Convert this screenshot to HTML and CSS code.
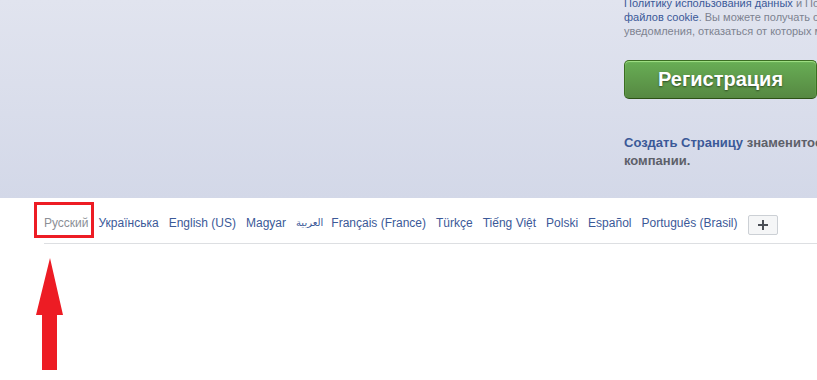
FILE: index.html
```html
<!DOCTYPE html>
<html lang="ru">
<head>
    <meta charset="UTF-8">
    <meta name="viewport" content="width=device-width, initial-scale=1.0">
    <title>Регистрация</title>
    <link rel="stylesheet" href="styles.css">
</head>
<body>
    <div class="top">
        <div class="signup">
            <p class="legal">
                <a href="#">Политику использования данных</a> и Политику в отношении<br>
                <a href="#">файлов cookie</a>. Вы можете получать сообщения и<br>
                уведомления, отказаться от которых можно в любой момент.
            </p>
            <button class="signup-btn">Регистрация</button>
            <p class="create-page">
                <a href="#">Создать Страницу</a> знаменитости, группы или<br>
                компании.
            </p>
        </div>
    </div>

    <div class="footer">
        <ul class="langs">
            <li class="current">Русский</li>
            <li><a href="#">Українська</a></li>
            <li><a href="#">English (US)</a></li>
            <li><a href="#">Magyar</a></li>
            <li class="arabic"><a href="#" dir="rtl">العربية</a></li>
            <li><a href="#">Français (France)</a></li>
            <li><a href="#">Türkçe</a></li>
            <li><a href="#">Tiếng Việt</a></li>
            <li><a href="#">Polski</a></li>
            <li><a href="#">Español</a></li>
            <li><a href="#">Português (Brasil)</a></li>
            <li>
                <button class="more-btn">
                    <svg width="10" height="10" viewBox="0 0 10 10">
                        <path d="M5 0v10M0 5h10" stroke="#4b4f56" stroke-width="2"/>
                    </svg>
                </button>
            </li>
        </ul>
    </div>

    <!-- annotation -->
    <div class="mark-box"></div>
    <svg class="mark-arrow" width="28" height="112" viewBox="0 0 28 112">
        <polygon points="14,0 27,57 21,57 21,112 6,112 6,57 0,57" fill="#ed1c24"/>
    </svg>
</body>
</html>
```

FILE: styles.css
```css
body {
    margin: 0;
    font-family: "Liberation Sans", Arial, sans-serif;
    background-color: #FFF;
    overflow: hidden;
    height: 380px;
    position: relative;
}
a {
    color: #3b5998;
    text-decoration: none;
}
.top {
    height: 198px;
    background: linear-gradient(#e1e4ef, #d3d8e8);
    overflow: hidden;
}
.signup {
    margin-left: 624px;
    width: 400px;
}
.legal {
    margin: -4px 0 0;
    font-size: 11px;
    line-height: 14px;
    color: #7d8290;
    white-space: nowrap;
}
.signup-btn {
    display: block;
    margin-top: 22px;
    width: 193px;
    height: 39px;
    padding: 0;
    border: 1px solid #3b6e22;
    border-bottom-color: #2c5115;
    border-radius: 5px;
    background: linear-gradient(#68ae55, #568842);
    box-shadow: inset 0 1px 1px #a4e388;
    color: #FFF;
    font-family: "Liberation Sans", Arial, sans-serif;
    font-size: 20px;
    font-weight: bold;
    text-shadow: 0 1px 2px rgba(0, 0, 0, 0.5);
}
.create-page {
    margin: 35px 0 0;
    font-size: 13px;
    line-height: 18px;
    font-weight: bold;
    color: #5d6069;
    white-space: nowrap;
}
.footer {
    padding-left: 44px;
}
.langs {
    display: flex;
    align-items: flex-start;
    gap: 10px;
    list-style: none;
    margin: 0;
    padding: 17px 0 8px;
    border-bottom: 1px solid #dddfe2;
    font-size: 12px;
    line-height: 16px;
    white-space: nowrap;
}
.langs li {
    margin: 0;
}
.current {
    color: #8c8f96;
    margin-left: -1px;
}
.arabic {
    font-family: "DejaVu Sans", sans-serif;
    font-size: 10px;
}
.langs .arabic {
    margin-right: -2px;
}
.more-btn {
    display: flex;
    align-items: center;
    justify-content: center;
    width: 30px;
    height: 20px;
    padding: 0;
    border: 1px solid #ccd0d5;
    border-radius: 2px;
    background-color: #f5f6f7;
}
.mark-box {
    position: absolute;
    left: 34px;
    top: 202px;
    width: 54px;
    height: 30px;
    border: 3px solid #ed1c24;
}
.mark-arrow {
    position: absolute;
    left: 36px;
    top: 258px;
}
```
